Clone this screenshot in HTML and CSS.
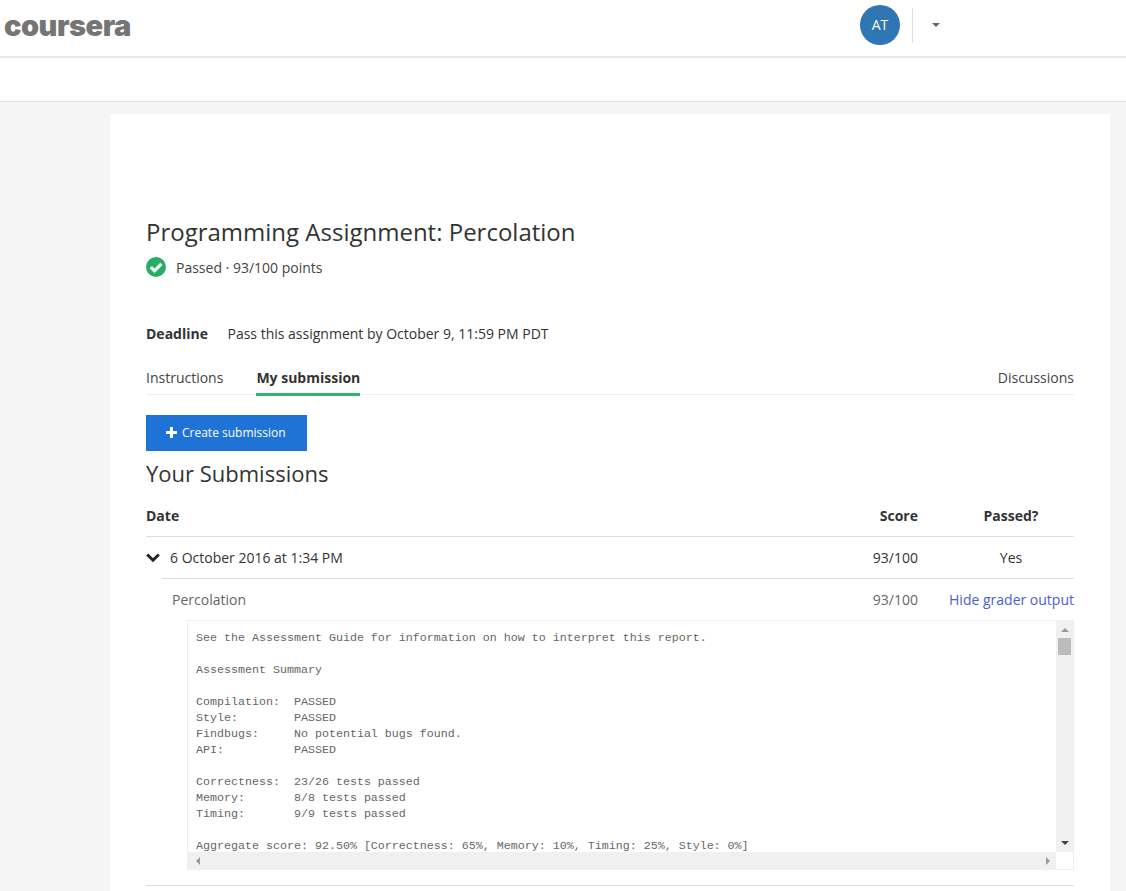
FILE: index.html
```html
<!DOCTYPE html>
<html lang="en">
<head>
  <meta charset="UTF-8" />
  <title>Programming Assignment: Percolation - Coursera</title>
  <link rel="stylesheet" href="styles.css">
</head>
<body>
  <header class="topbar">
    <div class="logo">coursera</div>
    <div class="user-menu">
      <div class="avatar">AT</div>
      <div class="divider"></div>
      <div class="caret"></div>
    </div>
  </header>
  <div class="subbar"></div>

  <main class="card">
    <h1>Programming Assignment: Percolation</h1>
    <div class="status">
      <svg class="check" width="20" height="20" viewBox="0 0 20 20">
        <circle cx="10" cy="10" r="10" fill="#25ae64" />
        <path d="M4.800 10.200l3.700 3.600L15.400 6.800" fill="none" stroke="#fff" stroke-width="3.200" />
      </svg>
      <span>Passed · 93/100 points</span>
    </div>

    <div class="deadline">
      <strong>Deadline</strong>
      <span>Pass this assignment by October 9, 11:59 PM PDT</span>
    </div>

    <nav class="tabs">
      <a class="tab">Instructions</a>
      <a class="tab active">My submission</a>
      <a class="tab right">Discussions</a>
    </nav>

    <button class="create-btn">
      <svg width="11" height="11" viewBox="0 0 11 11"><path d="M4 0h3v4h4v3H7v4H4V7H0V4h4z" fill="#fff" /></svg>
      <span class="btn-label">Create submission</span>
    </button>

    <h2>Your Submissions</h2>

    <div class="row head">
      <div class="col-date">Date</div>
      <div class="col-score">Score</div>
      <div class="col-passed">Passed?</div>
    </div>
    <div class="row sub-row">
      <div class="col-date">
        <svg class="chevron" width="14" height="10" viewBox="0 0 14 10"><path d="M1.200 1.500L7 7.200l5.800-5.700" fill="none" stroke="#222" stroke-width="3" /></svg>
        6 October 2016 at 1:34 PM
      </div>
      <div class="col-score">93/100</div>
      <div class="col-passed">Yes</div>
    </div>
    <div class="part">
      <div class="row part-row">
        <div class="col-date">Percolation</div>
        <div class="col-score">93/100</div>
        <a class="col-passed hide-link">Hide grader output</a>
      </div>
      <div class="grader">
<pre class="grader-text">See the Assessment Guide for information on how to interpret this report.

Assessment Summary

Compilation:  PASSED
Style:        PASSED
Findbugs:     No potential bugs found.
API:          PASSED

Correctness:  23/26 tests passed
Memory:       8/8 tests passed
Timing:       9/9 tests passed

Aggregate score: 92.50% [Correctness: 65%, Memory: 10%, Timing: 25%, Style: 0%]</pre>
        <div class="vscroll">
          <div class="arrow up"></div>
          <div class="thumb"></div>
          <div class="arrow down"></div>
        </div>
        <div class="hscroll">
          <div class="arrow left"></div>
          <div class="arrow right-arrow"></div>
        </div>
        <div class="corner"></div>
      </div>
    </div>
    <div class="end-line"></div>
  </main>
</body>
</html>
```

FILE: styles.css
```css
html, body {
  height: 891px;
  overflow: hidden;
}
body {
  margin: 0;
  font-family: "Open Sans", sans-serif;
  font-size: 14px;
  color: #333;
  background: #f5f5f5;
}
.topbar {
  height: 56px;
  background: #fff;
  border-bottom: 2px solid #e8e8e8;
  display: flex;
  justify-content: space-between;
  align-items: center;
}
.logo {
  margin-left: 4px;
  margin-top: -5px;
  font-family: Inter, sans-serif;
  font-weight: 900;
  font-size: 29px;
  line-height: 36px;
  letter-spacing: -0.500px;
  color: #757575;
}
.user-menu {
  display: flex;
  align-items: center;
  margin-right: 186px;
  margin-top: -6px;
}
.avatar {
  width: 40px;
  height: 40px;
  border-radius: 50%;
  background: #2f76b5;
  color: #fff;
  font-size: 14px;
  line-height: 40px;
  text-align: center;
}
.divider {
  width: 1px;
  height: 35px;
  background: #ddd;
  margin-left: 12px;
}
.caret {
  width: 0;
  height: 0;
  border-left: 4px solid transparent;
  border-right: 4px solid transparent;
  border-top: 4px solid #666;
  margin-left: 19px;
}
.subbar {
  height: 43px;
  background: #fff;
  border-bottom: 1px solid #e1e1e1;
}
.card {
  box-sizing: border-box;
  margin: 12px 16px 0 110px;
  padding: 101px 36px 0;
  height: 777px;
  background: #fff;
}
h1 {
  margin: 0;
  font-size: 24px;
  font-weight: 400;
  line-height: 34px;
  color: #333;
}
.status {
  display: flex;
  align-items: center;
  gap: 10px;
  margin-top: 8px;
  height: 20px;
  color: #444;
}
.deadline {
  display: flex;
  gap: 19.500px;
  margin-top: 47px;
  line-height: 20px;
}
.deadline strong {
  font-weight: 700;
}
.tabs {
  display: flex;
  gap: 33px;
  margin-top: 24px;
  height: 26px;
  border-bottom: 1px solid #eee;
}
.tab {
  line-height: 20px;
  color: #444;
}
.tab.active {
  font-weight: 700;
  color: #333;
  height: 25px;
  border-bottom: 3px solid #2fb474;
}
.tab.right {
  margin-left: auto;
}
.create-btn {
  display: flex;
  align-items: center;
  gap: 5px;
  width: 161px;
  height: 36px;
  margin-top: 20px;
  padding: 0 0 1px 20px;
  border: none;
  background: #2073d6;
  color: #fff;
  font-family: "Open Sans", sans-serif;
  font-size: 12px;
}
.btn-label {
  padding-bottom: 1px;
}
h2 {
  margin: 5px 0 0;
  font-size: 22px;
  font-weight: 400;
  line-height: 34px;
  color: #333;
}
.row {
  display: flex;
  align-items: center;
}
.col-date {
  flex: 1;
  display: flex;
  align-items: center;
}
.col-score {
  width: 80px;
  text-align: right;
}
.col-passed {
  width: 126px;
  margin-left: 30px;
  text-align: center;
  white-space: nowrap;
}
.head {
  margin-top: 3px;
  height: 41px;
  padding-top: 2px;
  font-weight: 700;
  border-bottom: 1px solid #ddd;
}
.sub-row {
  height: 41px;
}
.chevron {
  margin-right: 10px;
}
.part {
  margin-left: 16px;
  border-top: 1px solid #ddd;
}
.part-row {
  height: 41px;
  padding-left: 10px;
  color: #666;
}
.hide-link {
  color: #4a5fd0;
  text-align: right;
}
.grader {
  display: grid;
  grid-template-columns: 1fr 18px;
  grid-template-rows: 232px 18px;
  margin-left: 25px;
  height: 250px;
}
.grader-text {
  margin: 0;
  padding: 9px 8px 0;
  border-top: 1px solid #eee;
  border-left: 1px solid #eee;
  font-family: "Liberation Mono", monospace;
  font-size: 11.660px;
  line-height: 16px;
  color: #666;
  overflow: hidden;
}
.vscroll {
  background: #f0f0f0;
  position: relative;
}
.thumb {
  position: absolute;
  top: 18px;
  left: 2px;
  width: 13px;
  height: 17px;
  background: #bcbcbc;
}
.hscroll {
  background: #f0f0f0;
  display: flex;
  justify-content: space-between;
  align-items: center;
  padding: 0 6px 0 9px;
}
.corner {
  background: #fff;
  border-right: 1px solid #eee;
  border-bottom: 1px solid #eee;
}
.arrow {
  width: 0;
  height: 0;
}
.arrow.up {
  position: absolute;
  top: 8px;
  left: 5px;
  border-left: 4px solid transparent;
  border-right: 4px solid transparent;
  border-bottom: 4px solid #999;
}
.arrow.down {
  position: absolute;
  bottom: 7px;
  left: 5px;
  border-left: 4px solid transparent;
  border-right: 4px solid transparent;
  border-top: 4px solid #444;
}
.arrow.left {
  border-top: 4px solid transparent;
  border-bottom: 4px solid transparent;
  border-right: 4px solid #999;
}
.arrow.right-arrow {
  border-top: 4px solid transparent;
  border-bottom: 4px solid transparent;
  border-left: 4px solid #999;
}
.end-line {
  margin-top: 15px;
  border-top: 1px solid #ddd;
}
```
